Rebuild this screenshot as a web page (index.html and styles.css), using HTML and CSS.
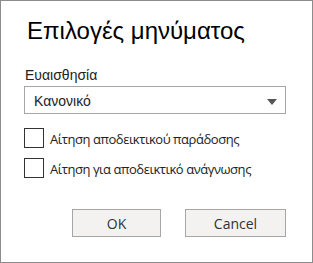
FILE: index.html
```html
<!DOCTYPE html>
<html lang="el">
<head>
  <meta charset="UTF-8">
  <title>Επιλογές μηνύματος</title>
  <link rel="stylesheet" href="styles.css">
</head>
<body>
  <!-- Message options dialog -->
  <div class="dialog">
    <h1 class="title">Επιλογές μηνύματος</h1>

    <label class="field-label">Ευαισθησία</label>
    <div class="select">
      <span class="select-value">Κανονικό</span>
      <span class="select-arrow"></span>
    </div>

    <div class="checks">
      <div class="check-row">
        <span class="check-box"></span>
        <span class="check-label">Αίτηση αποδεικτικού παράδοσης</span>
      </div>
      <div class="check-row">
        <span class="check-box"></span>
        <span class="check-label">Αίτηση για αποδεικτικό ανάγνωσης</span>
      </div>
    </div>

    <div class="buttons">
      <button class="btn btn-ok">OK</button>
      <button class="btn btn-cancel">Cancel</button>
    </div>
  </div>
</body>
</html>
```

FILE: styles.css
```css
* {
  margin: 0;
  padding: 0;
  box-sizing: border-box;
}
body {
  background: #fff;
  font-family: "Liberation Sans", Arial, sans-serif;
  color: #000;
}
/* Dialog frame */
.dialog {
  width: 313px;
  height: 263px;
  border: 1px solid #8c8c8c;
  background: #fff;
  padding: 16px 26px 0 23px;
}
.title {
  font-size: 24px;
  font-weight: normal;
  line-height: 28px;
  margin-left: 3px;
  color: #000;
}
.field-label {
  display: block;
  margin-top: 22px;
  margin-left: 1px;
  font-size: 14px;
  line-height: 16px;
  color: #222;
}
/* Dropdown */
.select {
  display: flex;
  align-items: center;
  justify-content: space-between;
  margin-top: 3px;
  height: 28px;
  border: 1px solid #a6a6a6;
  padding: 2px 8px 0 9px;
}
.select-value {
  font-size: 14px;
  color: #222;
}
.select-arrow {
  width: 0;
  height: 0;
  border-left: 5px solid transparent;
  border-right: 5px solid transparent;
  border-top: 6px solid #555;
  margin-top: 1px;
}
/* Checkboxes */
.checks {
  display: flex;
  flex-direction: column;
  gap: 10px;
  margin-top: 14px;
}
.check-row {
  display: flex;
  align-items: center;
  height: 20px;
}
.check-box {
  width: 20px;
  height: 20px;
  border: 1px solid #333;
  background: #fff;
  flex-shrink: 0;
}
.check-label {
  margin-left: 6px;
  font-family: "Open Sans", sans-serif;
  font-size: 13px;
  letter-spacing: -0.45px;
  color: #222;
  padding-top: 1px;
}
/* Buttons */
.buttons {
  display: flex;
  justify-content: flex-end;
  gap: 24px;
  margin-top: 31px;
}
.btn {
  height: 28px;
  background: #f3f2f1;
  border: 1px solid #a6a6a6;
  font-family: "Open Sans", sans-serif;
  font-size: 14px;
  color: #333;
}
.btn-ok {
  width: 89px;
}
.btn-cancel {
  width: 101px;
}
```
